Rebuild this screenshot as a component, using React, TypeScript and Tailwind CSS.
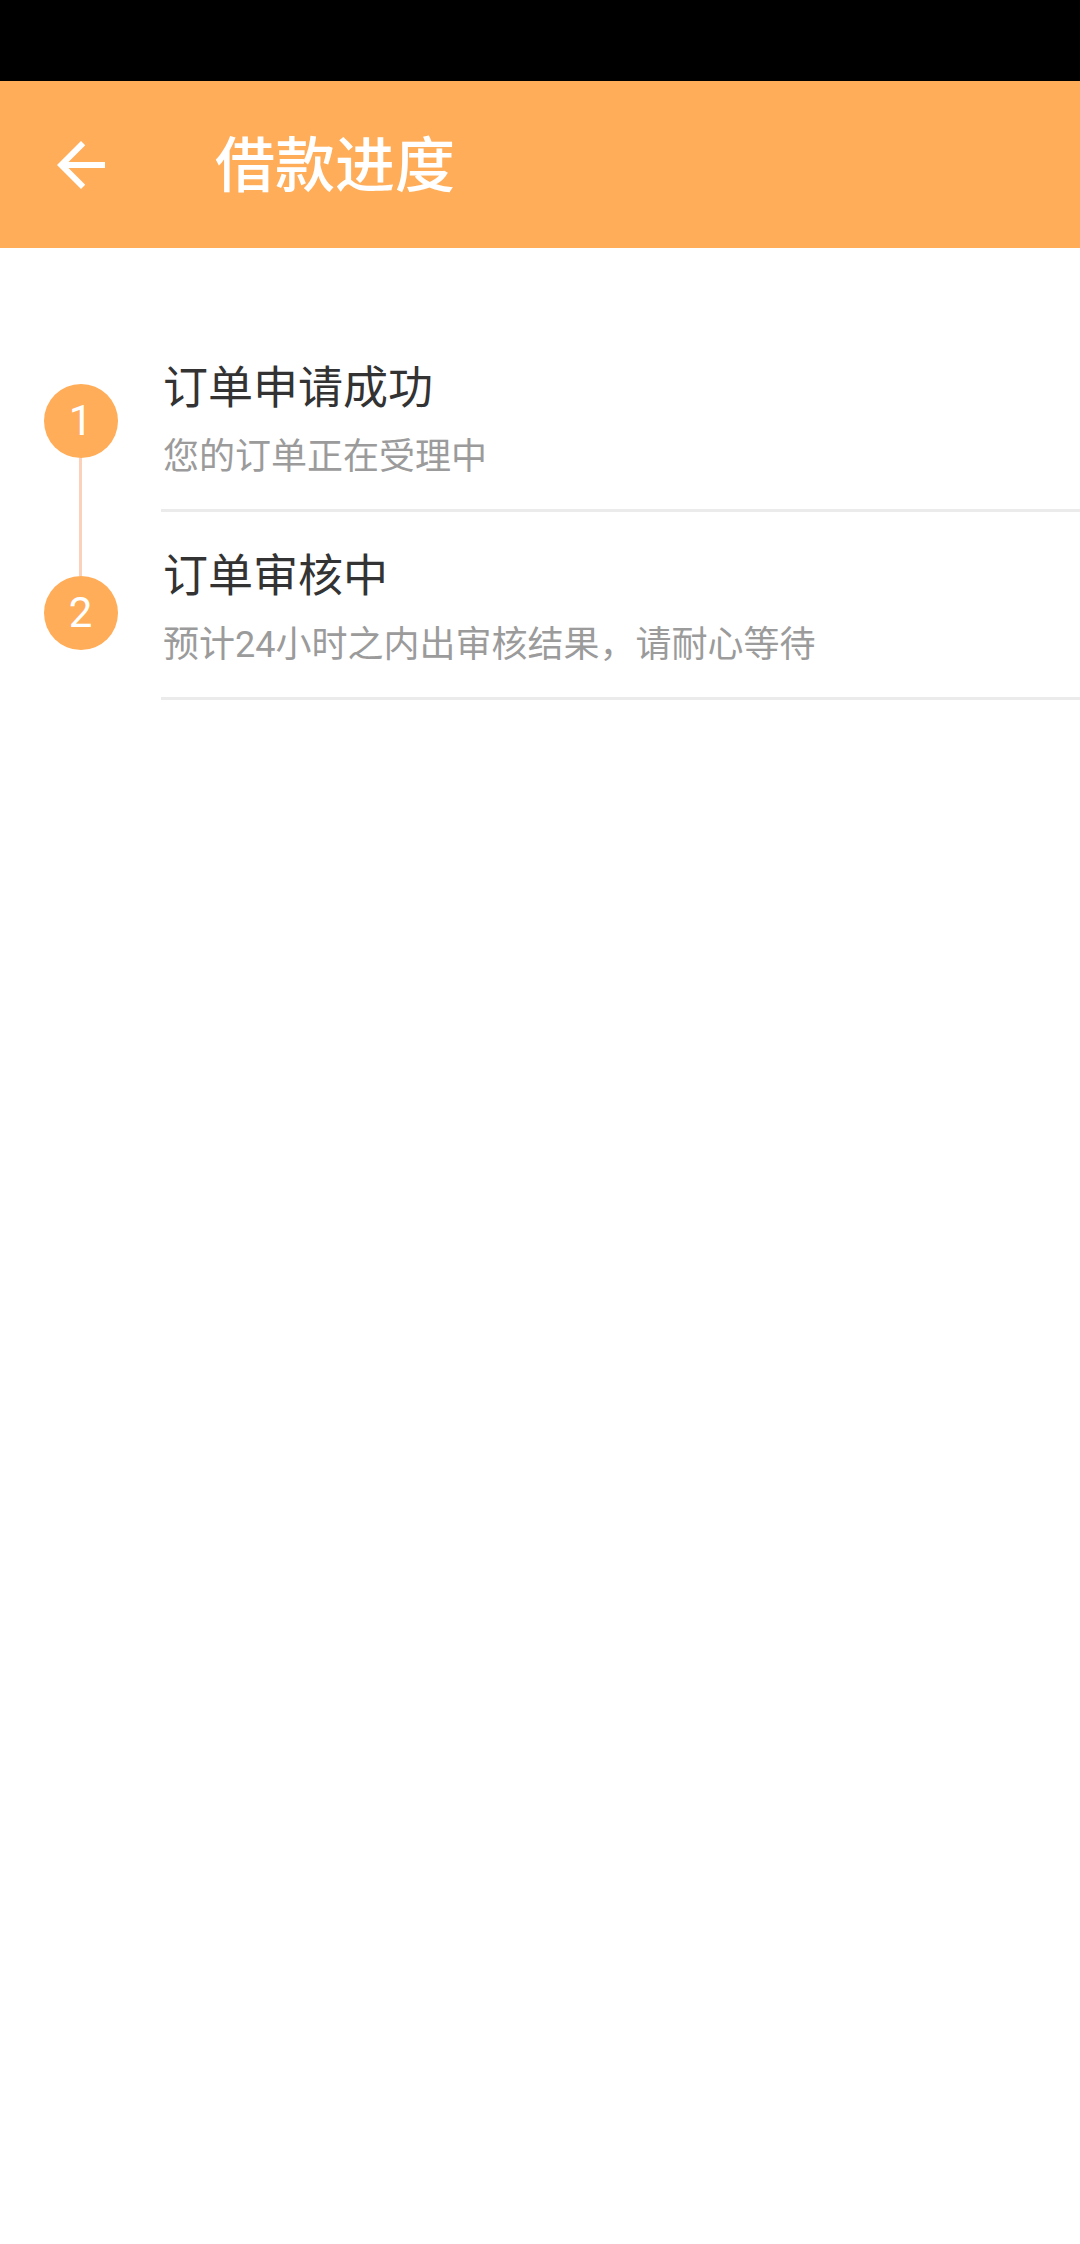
import React from 'react';

const STEPS = [
  { no: 1, title: '订单申请成功', desc: '您的订单正在受理中', top: 60, lineTop: false, lineBottom: true },
  { no: 2, title: '订单审核中', desc: '预计24小时之内出审核结果，请耐心等待', top: 64, lineTop: true, lineBottom: false },
];

const font = { fontFamily: 'Roboto, "Noto Sans CJK SC", sans-serif' };

export default function App() {
  return (
    <div className="w-[1080px] min-h-[2244px] bg-white" style={font}>
      {/* status bar */}
      <div className="h-[81px] bg-black" />

      {/* toolbar */}
      <div className="h-[167px] bg-[#ffad58] flex items-center">
        <button className="ml-[45px] w-[72px] h-[72px] flex items-center justify-center">
          <svg viewBox="0 0 24 24" className="w-[72px] h-[72px]" fill="#ffffff">
            <path d="M20 11H7.83l5.59-5.59L12 4l-8 8 8 8 1.41-1.41L7.83 13H20v-2z" />
          </svg>
        </button>
        <div className="ml-[98px] mt-[5px] text-white text-[60px] leading-none font-medium">借款进度</div>
      </div>

      {/* progress list */}
      <div className="mt-[76px]">
        {STEPS.map((s) => (
          <div key={s.no} className="flex items-stretch">
            <div className="w-[161px] shrink-0 flex flex-col items-center">
              <div
                className={`w-[3px] ${s.lineTop ? 'bg-[#fbd1ba]' : 'bg-transparent'}`}
                style={{ height: s.top }}
              />
              <div className="w-[74px] h-[74px] rounded-full bg-[#ffad58] flex items-center justify-center text-white text-[42px] leading-none">
                {s.no}
              </div>
              <div className={`w-[3px] flex-1 ${s.lineBottom ? 'bg-[#fbd1ba]' : 'bg-transparent'}`} />
            </div>
            <div className="flex-1 pt-[39px] pb-[31px] border-b-[3px] border-[#ebebeb]">
              <div className="pl-[2px] text-[45px] leading-[52px] text-[#333333]">{s.title}</div>
              <div className="pl-[2px] mt-[22px] text-[36px] leading-[41px] text-[#9b9b9b]">{s.desc}</div>
            </div>
          </div>
        ))}
      </div>
    </div>
  );
}
